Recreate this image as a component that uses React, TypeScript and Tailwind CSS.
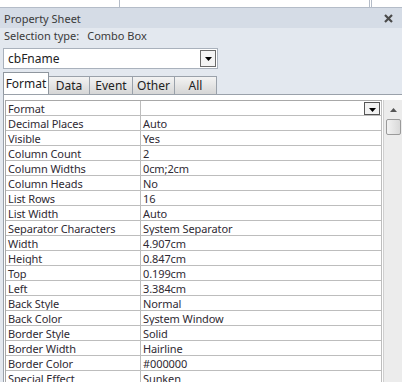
import React from "react";

const rows: [string, string][] = [
  ["Format", ""],
  ["Decimal Places", "Auto"],
  ["Visible", "Yes"],
  ["Column Count", "2"],
  ["Column Widths", "0cm;2cm"],
  ["Column Heads", "No"],
  ["List Rows", "16"],
  ["List Width", "Auto"],
  ["Separator Characters", "System Separator"],
  ["Width", "4.907cm"],
  ["Height", "0.847cm"],
  ["Top", "0.199cm"],
  ["Left", "3.384cm"],
  ["Back Style", "Normal"],
  ["Back Color", "System Window"],
  ["Border Style", "Solid"],
  ["Border Width", "Hairline"],
  ["Border Color", "#000000"],
  ["Special Effect", "Sunken"],
];

function DropTri() {
  return (
    <svg width="7" height="4" viewBox="0 0 7 4">
      <polygon points="0,0 7,0 3.5,4" fill="#000" />
    </svg>
  );
}

export default function App() {
  const font = { fontFamily: '"Noto Sans", "Open Sans", Arial, sans-serif' };
  return (
    <div
      className="w-[402px] h-[382px] overflow-hidden bg-[#e3e8ef] flex flex-col text-[#2f2a33]"
      style={font}
    >
      {/* top strip */}
      <div className="h-[8px] bg-white border-b border-[#b4bcc8] flex shrink-0">
        <div className="w-[120px] border-r border-[#b4bcc8]" />
        <div className="w-[250px] border-r border-[#b4bcc8]" />
        <div className="w-[2px] border-r border-[#b4bcc8]" />
      </div>
      {/* title bar */}
      <div className="h-[20px] bg-[#d5dce6] flex items-center justify-between pl-[4px] pr-[9px] shrink-0">
        <span className="text-[11px] leading-none text-[#3a3a3a]">Property Sheet</span>
        <svg width="9" height="9" viewBox="0 0 9 9">
          <path d="M1 1 L8 8 M8 1 L1 8" stroke="#4a4a4a" strokeWidth="2.2" />
        </svg>
      </div>
      {/* selection type */}
      <div className="h-[14px] flex items-center pl-[4px] shrink-0 text-[11px] leading-none text-[#3a3a3a]">
        <span>Selection type:</span>
        <span className="ml-[8px]">Combo Box</span>
      </div>
      {/* combo */}
      <div className="mt-[6px] ml-[3px] w-[215px] h-[21px] bg-white border border-[#a9b1bc] flex items-center justify-between pl-[4px] pr-[1px] shrink-0">
        <span className="text-[12px] leading-none text-[#222]">cbFname</span>
        <div className="w-[16px] h-[17px] border border-[#6a6a6a] bg-[#f4f4f4] flex items-center justify-center">
          <DropTri />
        </div>
      </div>
      {/* tabs */}
      <div className="mt-[4px] ml-[3px] h-[21px] flex items-end shrink-0 relative z-10">
        <div className="w-[46px] h-[22px] bg-white border border-b-0 border-[#8f969e] flex items-center justify-center text-[12px] leading-none text-[#222]">
          Format
        </div>
        {[
          ["Data", "w-[41px]"],
          ["Event", "w-[43px]"],
          ["Other", "w-[42px]"],
          ["All", "w-[42px]"],
        ].map(([t, w]) => (
          <div
            key={t}
            className={`${w} h-[18px] bg-gradient-to-b from-[#f3f3f3] to-[#d6d6d6] border border-l-0 border-b-0 border-[#9aa1aa] flex items-center justify-center text-[12px] leading-none text-[#222]`}
          >
            {t}
          </div>
        ))}
      </div>
      {/* content */}
      <div className="flex-1 ml-[3px] bg-white border-t border-l border-[#9aa1aa] flex pt-[5px] pl-[1px]">
        <div className="w-[378px] flex flex-col border-t border-l border-[#a8a8a8] self-start">
          {rows.map(([k, v], i) => (
            <div key={k} className="h-[15px] flex border-b border-[#bdbdbd] text-[11px] leading-none tracking-[-0.1px]">
              <div className="w-[135px] border-r border-[#bdbdbd] flex items-center pl-[2px] whitespace-nowrap overflow-hidden">
                {k}
              </div>
              <div className="flex-1 border-r border-[#bdbdbd] flex items-center pl-[2px] justify-between whitespace-nowrap overflow-hidden">
                <span>{v}</span>
                {i === 0 && (
                  <div className="w-[16px] h-[13px] border border-[#555] bg-[#f2f2f2] flex items-end justify-center pb-[2px] mr-[1px]">
                    <DropTri />
                  </div>
                )}
              </div>
            </div>
          ))}
        </div>
        {/* scrollbar */}
        <div className="ml-[1px] w-[19px] h-full bg-[#ececec] border-l border-[#cfcfcf] flex flex-col items-center">
          <div className="mt-[4px] h-[12px] flex items-center justify-center">
            <svg width="7" height="4" viewBox="0 0 7 4">
              <polygon points="0,4 7,4 3.5,0" fill="#555" />
            </svg>
          </div>
          <div className="mt-[3px] w-[15px] h-[16px] rounded-[2px] border border-[#9a9a9a] bg-gradient-to-r from-[#f2f2f2] to-[#d9d9d9]" />
        </div>
      </div>
    </div>
  );
}
